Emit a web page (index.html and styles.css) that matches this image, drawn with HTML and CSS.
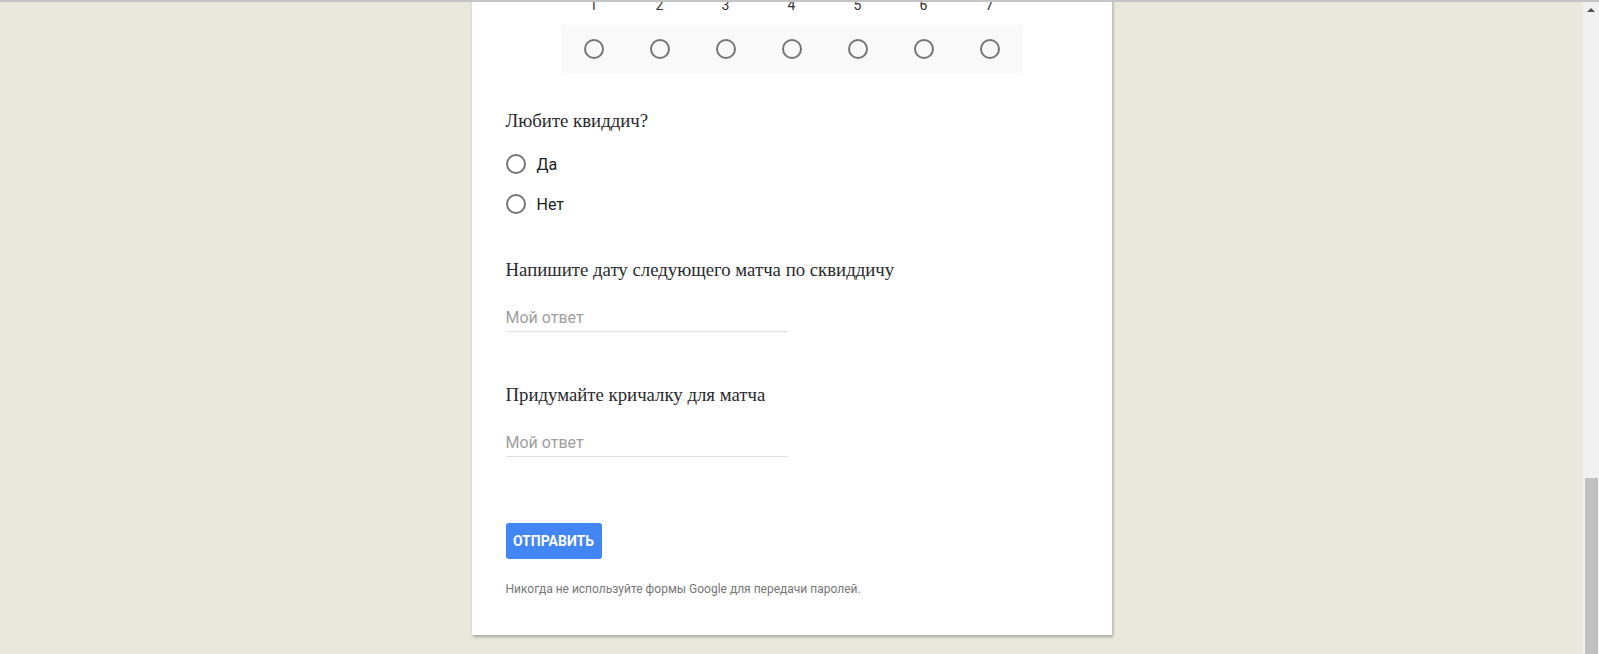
FILE: index.html
```html
<!DOCTYPE html>
<html lang="ru">
<head>
<meta charset="utf-8">
<title>Форма</title>
<link rel="stylesheet" href="styles.css">
</head>
<body>
<div class="topline"></div>
<div class="viewport">
  <div class="page">
    <div class="card">
      <div class="scale">
        <div class="scale-labels">
          <span class="col">1</span><span class="col">2</span><span class="col">3</span><span class="col">4</span><span class="col">5</span><span class="col">6</span><span class="col">7</span>
        </div>
        <div class="scale-radios">
          <span class="col"><span class="radio"></span></span>
          <span class="col"><span class="radio"></span></span>
          <span class="col"><span class="radio"></span></span>
          <span class="col"><span class="radio"></span></span>
          <span class="col"><span class="radio"></span></span>
          <span class="col"><span class="radio"></span></span>
          <span class="col"><span class="radio"></span></span>
        </div>
      </div>

      <div class="question q1">
        <div class="q-title">Любите квиддич?</div>
        <div class="options">
          <div class="option"><span class="radio"></span><span class="opt-label">Да</span></div>
          <div class="option"><span class="radio"></span><span class="opt-label">Нет</span></div>
        </div>
      </div>

      <div class="question q2">
        <div class="q-title">Напишите дату следующего матча по сквиддичу</div>
        <div class="answer a2">Мой ответ</div>
      </div>

      <div class="question q3">
        <div class="q-title">Придумайте кричалку для матча</div>
        <div class="answer a3">Мой ответ</div>
      </div>

      <div class="submit-row">
        <button class="submit" type="button">ОТПРАВИТЬ</button>
      </div>
      <div class="footnote">Никогда не используйте формы Google для передачи паролей.</div>
    </div>
  </div>
  <div class="scrollbar">
    <div class="arrow-up"></div>
    <div class="thumb"></div>
  </div>
</div>
</body>
</html>
```

FILE: styles.css
```css
html, body {
  margin: 0;
  padding: 0;
}
body {
  background: #e9e8dd;
  height: 654px;
  overflow: hidden;
  font-family: Roboto, "Noto Sans", Arial, sans-serif;
}
.topline {
  height: 2px;
  background: #c4c4c4;
}
.viewport {
  display: flex;
  height: 652px;
}
.page {
  flex: 1;
  display: flex;
  justify-content: center;
  align-items: flex-start;
  overflow: hidden;
}
.card {
  width: 640px;
  box-sizing: border-box;
  background: #fff;
  margin-top: -6px;
  padding: 0 34px 38px 34px;
  box-shadow: 1px 2px 3px rgba(0, 0, 0, 0.28);
}
.scale {
  margin-left: 55px;
  width: 462px;
}
.scale-labels {
  display: flex;
  height: 19px;
  line-height: 19px;
  font-size: 14px;
  color: #333;
}
.col {
  width: 66px;
  display: flex;
  justify-content: center;
  align-items: center;
}
.scale-radios {
  display: flex;
  height: 48px;
  margin-top: 10px;
  background: #f9f9f9;
}
.radio {
  display: inline-block;
  width: 16px;
  height: 16px;
  border: 2px solid #757575;
  border-radius: 50%;
  flex: none;
}
.q-title {
  font-family: "Liberation Serif", "Times New Roman", serif;
  font-size: 18.8px;
  line-height: 24px;
  color: #2a2a2e;
}
.q1 {
  margin-top: 36px;
}
.options {
  margin-top: 11px;
}
.option {
  display: flex;
  align-items: center;
  height: 40px;
}
.opt-label {
  margin-left: 11px;
  font-size: 16px;
  color: #202124;
}
.q2 {
  margin-top: 34px;
}
.q3 {
  margin-top: 51px;
}
.answer {
  width: 282px;
  font-size: 16px;
  line-height: 24px;
  color: #9e9e9e;
  padding-bottom: 1px;
  border-bottom: 1px solid #e0e0e0;
}
.a2 {
  margin-top: 24px;
}
.a3 {
  margin-top: 24px;
}
.submit-row {
  margin-top: 66px;
}
.submit {
  height: 36px;
  width: 96px;
  padding: 0;
  border: none;
  border-radius: 3px;
  background: #4285f4;
  color: #fff;
  font-family: Roboto, "Noto Sans", Arial, sans-serif;
  font-size: 14px;
  font-weight: 700;
  letter-spacing: 0;
}
.footnote {
  margin-top: 22px;
  font-size: 12px;
  line-height: 16px;
  color: #777;
}
.scrollbar {
  width: 16px;
  background: #f1f1f1;
  display: flex;
  flex-direction: column;
  align-items: center;
}
.arrow-up {
  margin-top: 6px;
  width: 0;
  height: 0;
  border-left: 4px solid transparent;
  border-right: 4px solid transparent;
  border-bottom: 4px solid #505050;
}
.thumb {
  margin-top: auto;
  height: 176px;
  width: 13px;
  margin-left: 1px;
  background: #c1c1c1;
}
```
